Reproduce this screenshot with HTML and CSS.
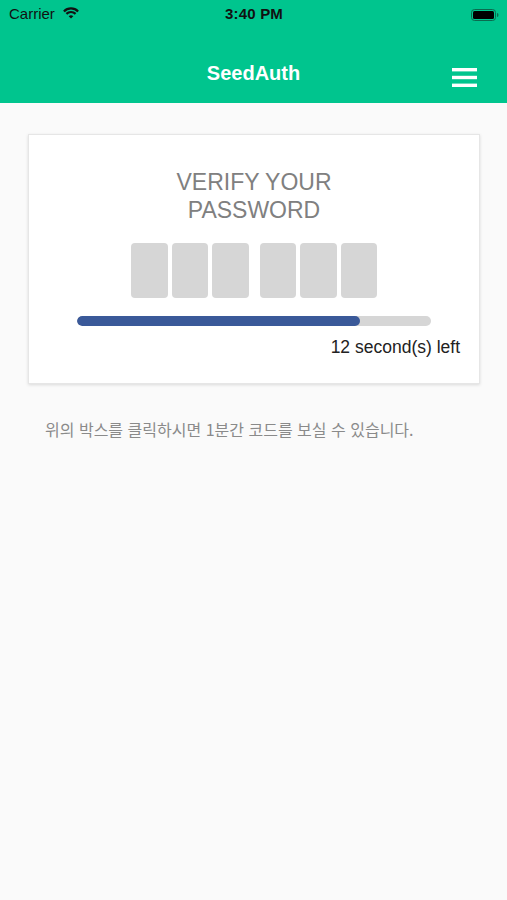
FILE: index.html
```html
<!DOCTYPE html>
<html lang="ko">
<head>
    <meta charset="UTF-8">
    <meta name="viewport" content="width=device-width, initial-scale=1.0">
    <title>SeedAuth</title>
    <link rel="stylesheet" href="styles.css">
</head>
<body>
    <header class="top">
        <div class="status">
            <div class="carrier">
                Carrier
                <svg class="wifi" width="18" height="13" viewBox="0 0 18 13">
                    <path d="M9 12.6 L6.7 10.3 A3.3 3.3 0 0 1 11.3 10.3 Z" fill="#111"/>
                    <path d="M4.4 7.9 A6.5 6.5 0 0 1 13.6 7.9" fill="none" stroke="#111" stroke-width="2.2"/>
                    <path d="M1.9 5.4 A10 10 0 0 1 16.1 5.4" fill="none" stroke="#111" stroke-width="2.2"/>
                </svg>
            </div>
            <div class="time">3:40 PM</div>
            <div class="battery">
                <svg width="28" height="12" viewBox="0 0 28 12">
                    <rect x="0.5" y="0.5" width="24" height="11" rx="3" fill="none" stroke="#0b6b4f" stroke-width="1"/>
                    <rect x="2" y="2" width="21" height="8" rx="1.5" fill="#000"/>
                    <path d="M26 4 Q27.5 4 27.5 6 Q27.5 8 26 8 Z" fill="#0b6b4f"/>
                </svg>
            </div>
        </div>
        <nav class="nav">
            <span></span>
            <h1 class="title">SeedAuth</h1>
            <button class="menu" aria-label="menu">
                <svg width="25" height="19" viewBox="0 0 25 19">
                    <rect x="0" y="0" width="25" height="3.4" fill="#fff"/>
                    <rect x="0" y="7.8" width="25" height="3.4" fill="#fff"/>
                    <rect x="0" y="15.6" width="25" height="3.4" fill="#fff"/>
                </svg>
            </button>
        </nav>
    </header>

    <main class="content">
        <section class="card">
            <h2 class="verify">VERIFY YOUR<br>PASSWORD</h2>
            <div class="code">
                <div class="group">
                    <span class="digit"></span>
                    <span class="digit"></span>
                    <span class="digit"></span>
                </div>
                <div class="group">
                    <span class="digit"></span>
                    <span class="digit"></span>
                    <span class="digit"></span>
                </div>
            </div>
            <div class="bar">
                <div class="fill" style="width: 80%"></div>
            </div>
            <p class="left">12 second(s) left</p>
        </section>

        <p class="hint">위의 박스를 클릭하시면 1분간 코드를 보실 수 있습니다.</p>
    </main>
</body>
</html>
```

FILE: styles.css
```css
body {
    margin: 0;
    font-family: "Liberation Sans", Arial, sans-serif;
    background-color: #fafafa;
}
.top {
    background-color: #00c58e;
    height: 103px;
}
.status {
    height: 27px;
    padding: 5px 8px 0 9px;
    box-sizing: border-box;
    display: grid;
    grid-template-columns: 1fr auto 1fr;
    font-size: 15px;
    line-height: 18px;
    color: #111;
}
.carrier {
    display: flex;
    align-items: flex-start;
    gap: 7px;
}
.wifi {
    margin-top: 1px;
}
.time {
    font-weight: bold;
    letter-spacing: 0.2px;
}
.battery {
    justify-self: end;
    padding-top: 2px;
}
.nav {
    height: 76px;
    padding: 16px 30px 0 30px;
    box-sizing: border-box;
    display: grid;
    grid-template-columns: 1fr auto 1fr;
    align-items: center;
}
.title {
    margin: 0;
    color: #fff;
    font-size: 20px;
    line-height: 24px;
    font-weight: bold;
}
.menu {
    justify-self: end;
    margin-top: 9px;
    padding: 0;
    border: none;
    background: none;
    display: flex;
}
.content {
    padding: 31px 27px 0 28px;
}
.card {
    background-color: #fff;
    border: 1px solid #e6e6e6;
    box-shadow: 0 1px 3px rgba(0, 0, 0, 0.13);
    padding: 33px 19px 26px 19px;
    display: flex;
    flex-direction: column;
    align-items: center;
}
.verify {
    margin: 0;
    font-size: 23px;
    line-height: 28px;
    font-weight: normal;
    color: #808080;
    text-align: center;
}
.code {
    display: flex;
    gap: 11px;
    margin-top: 19px;
}
.group {
    display: flex;
    gap: 4px;
}
.digit {
    width: 36.5px;
    height: 55px;
    border-radius: 4px;
    background-color: #d6d6d6;
}
.bar {
    width: 354px;
    height: 10px;
    margin-top: 18px;
    border-radius: 5px;
    background-color: #d6d6d6;
    overflow: hidden;
}
.fill {
    height: 100%;
    border-radius: 5px;
    background-color: #3a5999;
}
.left {
    align-self: flex-end;
    margin: 11px 0 0 0;
    font-size: 17.5px;
    line-height: 20px;
    color: #222;
}
.hint {
    margin: 34px 0 0 17px;
    font-family: "Noto Sans CJK KR", sans-serif;
    font-size: 16px;
    line-height: 22px;
    color: #8a8a8a;
}
```
